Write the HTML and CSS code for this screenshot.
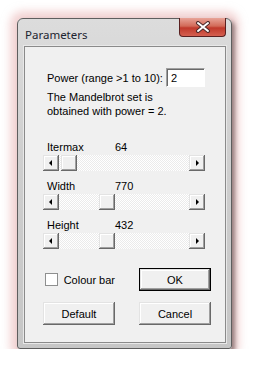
FILE: index.html
```html
<!DOCTYPE html>
<html lang="en">
<head>
  <meta charset="UTF-8">
  <title>Parameters</title>
  <link rel="stylesheet" href="styles.css">
</head>
<body>

<div class="dialog">
  <div class="titlebar">
    <span class="title">Parameters</span>
    <span class="close">
      <svg width="16" height="12" viewBox="0 0 16 12">
        <path d="M3 2 L13 10 M13 2 L3 10" stroke="#4a2a2a" stroke-width="4" stroke-linecap="round"/>
        <path d="M3 2 L13 10 M13 2 L3 10" stroke="#fff" stroke-width="2" stroke-linecap="round"/>
      </svg>
    </span>
  </div>

  <div class="client">
    <div class="power-row">
      <span class="power-label">Power (range &gt;1 to 10):</span>
      <span class="field">2</span>
    </div>
    <p class="note">The Mandelbrot set is<br>obtained with power = 2.</p>

    <div class="slider">
      <div class="slider-label"><span class="name">Itermax</span><span>64</span></div>
      <div class="scrollbar">
        <span class="arrow left"></span>
        <span class="track"><span class="thumb" style="margin-left: 2px"></span></span>
        <span class="arrow right"></span>
      </div>
    </div>

    <div class="slider">
      <div class="slider-label"><span class="name">Width</span><span>770</span></div>
      <div class="scrollbar">
        <span class="arrow left"></span>
        <span class="track"><span class="thumb" style="margin-left: 40px"></span></span>
        <span class="arrow right"></span>
      </div>
    </div>

    <div class="slider">
      <div class="slider-label"><span class="name">Height</span><span>432</span></div>
      <div class="scrollbar">
        <span class="arrow left"></span>
        <span class="track"><span class="thumb" style="margin-left: 40px"></span></span>
        <span class="arrow right"></span>
      </div>
    </div>

    <div class="actions">
      <label class="check"><span class="box"></span>Colour bar</label>
      <button class="btn btn-default">OK</button>
      <button class="btn">Default</button>
      <button class="btn">Cancel</button>
    </div>
  </div>
</div>

</body>
</html>
```

FILE: styles.css
```css
body {
  margin: 0;
  background-color: #fff;
  font-family: "Liberation Sans", Arial, sans-serif;
  font-size: 11px;
  color: #000;
}
.dialog {
  width: 215px;
  height: 331px;
  margin: 18px 0 0 17px;
  box-sizing: border-box;
  border: 1px solid #5e5e5e;
  border-radius: 6px 6px 3px 3px;
  background: linear-gradient(#dcdcdc, #cfcfcf 40%, #c6c6c6);
  box-shadow: 3px 3px 4px rgba(60, 40, 40, 0.5), 0 0 8px 7px rgba(232, 175, 175, 0.55);
  padding: 0 5px 5px 6px;
  display: flex;
  flex-direction: column;
}
.titlebar {
  height: 27px;
  display: flex;
  justify-content: space-between;
  align-items: flex-start;
}
.title {
  font-family: "Noto Sans", sans-serif;
  font-size: 11.5px;
  color: #1c2430;
  margin: 8px 0 0 1px;
}
.close {
  width: 47px;
  height: 19px;
  margin-top: -1px;
  box-sizing: border-box;
  border: 1px solid #5a2020;
  border-top: none;
  border-radius: 0 0 4px 4px;
  background: linear-gradient(#e8a498, #d26a58 45%, #c0392b 55%, #d46050);
  display: flex;
  align-items: center;
  justify-content: center;
}
.client {
  flex: 1;
  background-color: #f0f0f0;
  border: 1px solid #8a8a8a;
  box-shadow: 0 0 0 1px #e8e8e8;
  padding: 0 0 0 18px;
}
.power-row {
  margin-top: 21px;
  height: 19px;
  display: flex;
  align-items: center;
  width: 162px;
  justify-content: space-between;
}
.power-label {
  margin-left: 4px;
}
.field {
  width: 39px;
  height: 19px;
  box-sizing: border-box;
  background: #fff;
  border: 1px solid;
  border-color: #a0a0a0 #fff #fff #a0a0a0;
  box-shadow: inset 1px 1px #696969;
  padding: 3px 0 0 4px;
  line-height: 13px;
}
.note {
  margin: 3px 0 0 4px;
  line-height: 14px;
}
.slider {
  margin-top: 9px;
}
.note + .slider {
  margin-top: 23px;
}
.slider-label {
  display: flex;
  line-height: 13px;
  margin-left: 4px;
}
.slider-label .name {
  width: 68px;
}
.scrollbar {
  display: flex;
  width: 162px;
  height: 16px;
  margin-top: 1px;
}
.arrow, .thumb {
  width: 16px;
  height: 16px;
  box-sizing: border-box;
  background: #f0f0f0;
  box-shadow: inset -1px -1px #696969, inset 1px 1px #e3e3e3, inset -2px -2px #a0a0a0, inset 2px 2px #fff;
  display: flex;
  align-items: center;
  justify-content: center;
}
.arrow::before {
  content: "";
  border-top: 3px solid transparent;
  border-bottom: 3px solid transparent;
}
.arrow.left::before {
  border-right: 3px solid #000;
  margin-left: -1px;
}
.arrow.right::before {
  border-left: 3px solid #000;
}
.track {
  flex: 1;
  display: flex;
  background: repeating-conic-gradient(#fff 0 25%, #ebebeb 0 50%) 0 0 / 2px 2px;
}
.actions {
  margin-top: 19px;
  width: 168px;
  display: grid;
  grid-template-columns: 72px 72px;
  justify-content: space-between;
  row-gap: 11px;
  align-items: center;
}
.check {
  display: flex;
  align-items: center;
  gap: 6px;
  margin-left: 2px;
  white-space: nowrap;
}
.box {
  width: 13px;
  height: 13px;
  box-sizing: border-box;
  background: #fff;
  border: 1px solid #8e8f8f;
}
.btn {
  height: 23px;
  font-family: "Liberation Sans", Arial, sans-serif;
  font-size: 11px;
  color: #000;
  background: #f0f0f0;
  border: none;
  padding: 0;
  box-shadow: inset -1px -1px #696969, inset 1px 1px #e3e3e3, inset -2px -2px #a0a0a0, inset 2px 2px #fff;
}
.btn-default {
  border: 1px solid #000;
}
```
